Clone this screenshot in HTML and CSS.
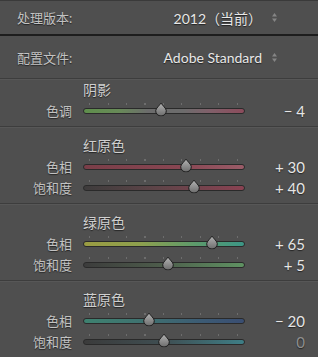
FILE: index.html
```html
<!DOCTYPE html>
<html lang="zh">

<head>
    <meta charset="UTF-8">
    <meta name="viewport" content="width=device-width, initial-scale=1.0">
    <title>HSL / 校准</title>
    <link rel="stylesheet" href="styles.css">
</head>

<body>
    <div class="panel">

        <!-- Process / profile menus -->
        <div class="menu-row menu-process">
            <span class="menu-label">处理版本:</span>
            <span class="menu-value">2012（当前）</span>
            <svg class="stepper" width="7" height="11" viewBox="0 0 7 11">
                <path d="M1 4.5 L3.5 1 L6 4.5 Z" />
                <path d="M1 6.5 L3.5 10 L6 6.5 Z" />
            </svg>
        </div>
        <div class="menu-row menu-profile">
            <span class="menu-label">配置文件:</span>
            <span class="menu-value">Adobe Standard</span>
            <svg class="stepper" width="7" height="11" viewBox="0 0 7 11">
                <path d="M1 4.5 L3.5 1 L6 4.5 Z" />
                <path d="M1 6.5 L3.5 10 L6 6.5 Z" />
            </svg>
        </div>

        <!-- Shadows -->
        <section class="group group-first">
            <div class="group-title">阴影</div>
            <div class="slider-row">
                <span class="slider-label">色调</span>
                <div class="track track-tint">
                    <svg class="thumb" style="left: 48.1%" width="13" height="14" viewBox="0 0 13 14"><use href="#knob" /></svg>
                </div>
                <span class="slider-value">− 4</span>
            </div>
        </section>

        <!-- Red primary -->
        <section class="group">
            <div class="group-title">红原色</div>
            <div class="slider-row">
                <span class="slider-label">色相</span>
                <div class="track track-red-hue">
                    <svg class="thumb" style="left: 63.7%" width="13" height="14" viewBox="0 0 13 14"><use href="#knob" /></svg>
                </div>
                <span class="slider-value">+ 30</span>
            </div>
            <div class="slider-row">
                <span class="slider-label">饱和度</span>
                <div class="track track-red-sat">
                    <svg class="thumb" style="left: 68.6%" width="13" height="14" viewBox="0 0 13 14"><use href="#knob" /></svg>
                </div>
                <span class="slider-value">+ 40</span>
            </div>
        </section>

        <!-- Green primary -->
        <section class="group">
            <div class="group-title">绿原色</div>
            <div class="slider-row">
                <span class="slider-label">色相</span>
                <div class="track track-green-hue">
                    <svg class="thumb" style="left: 79.7%" width="13" height="14" viewBox="0 0 13 14"><use href="#knob" /></svg>
                </div>
                <span class="slider-value">+ 65</span>
            </div>
            <div class="slider-row">
                <span class="slider-label">饱和度</span>
                <div class="track track-green-sat">
                    <svg class="thumb" style="left: 52.3%" width="13" height="14" viewBox="0 0 13 14"><use href="#knob" /></svg>
                </div>
                <span class="slider-value">+ 5</span>
            </div>
        </section>

        <!-- Blue primary -->
        <section class="group">
            <div class="group-title">蓝原色</div>
            <div class="slider-row">
                <span class="slider-label">色相</span>
                <div class="track track-blue-hue">
                    <svg class="thumb" style="left: 40.5%" width="13" height="14" viewBox="0 0 13 14"><use href="#knob" /></svg>
                </div>
                <span class="slider-value">− 20</span>
            </div>
            <div class="slider-row">
                <span class="slider-label">饱和度</span>
                <div class="track track-blue-sat">
                    <svg class="thumb" style="left: 50%" width="13" height="14" viewBox="0 0 13 14"><use href="#knob" /></svg>
                </div>
                <span class="slider-value slider-value-zero">0</span>
            </div>
        </section>
    </div>

    <!-- shared slider knob -->
    <svg class="defs" width="0" height="0">
        <defs>
            <linearGradient id="knobFill" x1="0" y1="0" x2="0" y2="1">
                <stop offset="0" stop-color="#b4b4b4" />
                <stop offset="1" stop-color="#6c6c6c" />
            </linearGradient>
            <symbol id="knob" viewBox="0 0 13 14">
                <path d="M6.5 0.8 C8 3 11.8 6.2 11.8 8.4 A5.3 5.3 0 0 1 1.2 8.4 C1.2 6.2 5 3 6.5 0.8 Z"
                    fill="url(#knobFill)" stroke="#1a1a1a" stroke-width="1" />
            </symbol>
        </defs>
    </svg>
</body>

</html>
```

FILE: styles.css
```css
/* General */
* {
    margin: 0;
    padding: 0;
    box-sizing: border-box;
}

body {
    background-color: #4f4f4f;
    font-family: "Lato", "Noto Sans CJK SC", sans-serif;
    color: #c6c6c6;
}

.panel {
    width: 318px;
    border-top: 1px solid #3a3a3a;
}

.defs {
    position: absolute;
}

/* Menu rows */
.menu-row {
    display: flex;
    align-items: center;
    padding: 0 40px 0 17px;
    text-shadow: 0 1px 1px rgba(0, 0, 0, 0.55);
}

.menu-process {
    height: 35px;
    border-bottom: 2px solid #1d1d1d;
}

.menu-profile {
    height: 42px;
}

.menu-label {
    flex: 1;
    font-size: 13px;
    color: #c2c2c2;
}

.menu-value {
    font-size: 14px;
    color: #e8e8e8;
}

.stepper {
    margin-left: 9px;
    fill: #858585;
}

/* Slider groups */
.group {
    border-top: 1px solid #3d3d3d;
    box-shadow: inset 0 1px 0 #575757;
    padding: 8px 0 5px;
}

.group-first {
    padding: 1px 0 5px;
}

.group-first .group-title {
    line-height: 20px;
}

.group-title {
    padding-left: 83px;
    font-size: 14px;
    line-height: 21px;
    color: #cfcfcf;
    text-shadow: 0 1px 1px rgba(0, 0, 0, 0.55);
}

.slider-row {
    display: grid;
    grid-template-columns: 72px 162px 1fr;
    column-gap: 11px;
    align-items: center;
    height: 21px;
    padding-right: 13px;
    text-shadow: 0 1px 1px rgba(0, 0, 0, 0.55);
}

.slider-label {
    text-align: right;
    font-size: 13px;
    color: #c2c2c2;
}

.slider-value {
    text-align: right;
    font-size: 15px;
    color: #e6e6e6;
}

.slider-value-zero {
    color: #8e8e8e;
}

/* Track */
.track {
    position: relative;
    height: 6px;
    border: 1px solid #2a2a2a;
    border-radius: 3px;
    background: #6a6a6a;
}

.track::before {
    content: "";
    position: absolute;
    left: 5px;
    top: -6px;
    width: 150px;
    height: 2px;
    background: repeating-linear-gradient(to right, #6d6d6d 0 1px, transparent 1px 18.5px);
}

.thumb {
    position: absolute;
    top: 50%;
    transform: translate(-50%, -62%);
}

.track-tint {
    background: linear-gradient(to right, #5f8f4c 0%, #688a58 22%, #6c6c6c 40%, #6c6c6c 62%, #80606a 78%, #8c4c5c 100%);
}

.track-red-hue {
    background: linear-gradient(to right, #7a3e48 0%, #884652 60%, #9a5c68 100%);
}

.track-red-sat {
    background: linear-gradient(to right, #3e3c3c 0%, #5e4448 45%, #8a4252 100%);
}

.track-green-hue {
    background: linear-gradient(to right, #9a9c42 0%, #8ea04e 35%, #5c9a6c 70%, #3c9686 100%);
}

.track-green-sat {
    background: linear-gradient(to right, #3c3c3c 0%, #4c5a4a 45%, #5f9262 100%);
}

.track-blue-hue {
    background: linear-gradient(to right, #3e8270 0%, #3f7070 40%, #3c5a74 75%, #3a4e72 100%);
}

.track-blue-sat {
    background: linear-gradient(to right, #3b3b3b 0%, #3f4e52 50%, #3e7e86 100%);
}
```
